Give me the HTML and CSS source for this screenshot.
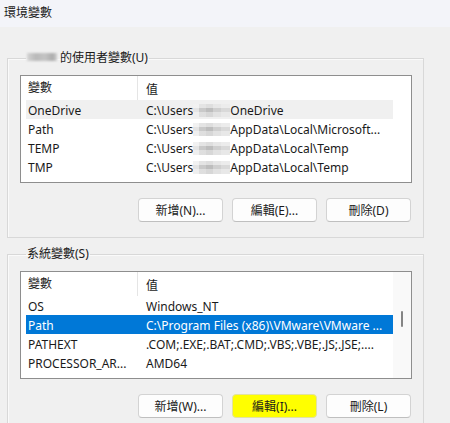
FILE: index.html
```html
<!DOCTYPE html>
<html lang="zh-Hant">
<head>
    <meta charset="UTF-8">
    <title>環境變數</title>
    <link rel="stylesheet" href="styles.css">
</head>
<body>
    <div class="titlebar">環境變數</div>

    <fieldset class="group">
        <legend><span class="blur-name"></span>的使用者變數(U)</legend>
        <div class="list">
            <div class="list-body">
                <div class="list-head">
                    <div class="head-name">變數</div>
                    <div class="head-value">值</div>
                </div>
                <div class="row hover">
                    <div class="cell-name">OneDrive</div>
                    <div class="cell-value">C:\Users<span class="blur-path"></span>OneDrive</div>
                </div>
                <div class="row">
                    <div class="cell-name">Path</div>
                    <div class="cell-value">C:\Users<span class="blur-path"></span>AppData\Local\Microsoft...</div>
                </div>
                <div class="row">
                    <div class="cell-name">TEMP</div>
                    <div class="cell-value">C:\Users<span class="blur-path"></span>AppData\Local\Temp</div>
                </div>
                <div class="row">
                    <div class="cell-name">TMP</div>
                    <div class="cell-value">C:\Users<span class="blur-path"></span>AppData\Local\Temp</div>
                </div>
            </div>
            <div class="scroll"></div>
        </div>
        <div class="buttons">
            <button class="btn">新增(N)...</button>
            <button class="btn">編輯(E)...</button>
            <button class="btn">刪除(D)</button>
        </div>
    </fieldset>

    <fieldset class="group">
        <legend>系統變數(S)</legend>
        <div class="list">
            <div class="list-body">
                <div class="list-head">
                    <div class="head-name">變數</div>
                    <div class="head-value">值</div>
                </div>
                <div class="row">
                    <div class="cell-name">OS</div>
                    <div class="cell-value">Windows_NT</div>
                </div>
                <div class="row selected">
                    <div class="cell-name">Path</div>
                    <div class="cell-value">C:\Program Files (x86)\VMware\VMware ...</div>
                </div>
                <div class="row">
                    <div class="cell-name">PATHEXT</div>
                    <div class="cell-value">.COM;.EXE;.BAT;.CMD;.VBS;.VBE;.JS;.JSE;....</div>
                </div>
                <div class="row">
                    <div class="cell-name">PROCESSOR_AR...</div>
                    <div class="cell-value">AMD64</div>
                </div>
            </div>
            <div class="scroll track">
                <div class="thumb"></div>
            </div>
        </div>
        <div class="buttons">
            <button class="btn">新增(W)...</button>
            <button class="btn highlight">編輯(I)...</button>
            <button class="btn">刪除(L)</button>
        </div>
    </fieldset>
</body>
</html>
```

FILE: styles.css
```css
body {
    margin: 0;
    background-color: #f0f0f0;
    font-family: "Noto Sans", "Noto Sans CJK TC", sans-serif;
    font-size: 12px;
    color: #1a1a1a;
    overflow: hidden;
}

.titlebar {
    height: 27px;
    line-height: 25px;
    padding-left: 4px;
    background-color: #f3f4f9;
}

.group {
    width: 392px;
    margin: 23px 0 0 7px;
    padding: 9px 11px 15px 12px;
    border: 1px solid #d8d8d8;
    box-shadow: inset 1px 1px 0 #fafafa;
    min-width: 0;
}

.group + .group {
    margin-top: 8px;
}

legend {
    height: 16px;
    line-height: 16px;
    padding: 0 1px;
    margin-left: 6px;
}

.blur-name {
    display: inline-block;
    width: 30px;
    height: 8px;
    margin-right: 3px;
    vertical-align: 1px;
    background: linear-gradient(90deg, #d4d4d4, #b9b9b9 30%, #c4c4c4 60%, #adadad 85%, #cfcfcf);
    filter: blur(1px);
}

.list {
    display: flex;
    height: 106px;
    border: 1px solid #8e8e8e;
    background-color: #fff;
    overflow: hidden;
}

.list-body {
    flex: 1;
    padding-left: 5px;
    min-width: 0;
}

.list-head {
    display: flex;
    height: 24px;
    align-items: center;
}

.head-name {
    width: 109px;
    padding-left: 2px;
    border-right: 1px solid #e5e5e5;
    line-height: 24px;
}

.head-value {
    padding-left: 8px;
    padding-top: 1px;
}

.row {
    display: flex;
    height: 19px;
    box-sizing: border-box;
    padding-top: 2px;
    line-height: 17px;
    white-space: nowrap;
}

.row.hover {
    background-color: #f0f0f0;
}

.row.selected {
    background-color: #0078d7;
    color: #fff;
}

.cell-name {
    width: 116px;
    padding-left: 2px;
    overflow: hidden;
}

.cell-value {
    flex: 1;
    padding-left: 2px;
    overflow: hidden;
}

.blur-path {
    display: inline-block;
    width: 37px;
    height: 13px;
    vertical-align: -2px;
    background:
        linear-gradient(180deg, rgba(255,255,255,0.5) 0 30%, rgba(0,0,0,0) 30% 60%, rgba(255,255,255,0.4) 60%),
        linear-gradient(90deg, #e4e4e4 0 15%, #c9c9c9 15% 35%, #bdbdbd 35% 55%, #cfcfcf 55% 75%, #d9d9d9 75%);
}

.scroll {
    width: 18px;
}

.scroll.track {
    background-color: #f9f9f9;
}

.thumb {
    width: 2px;
    height: 16px;
    margin: 39px 0 0 8px;
    background-color: #858585;
    border-radius: 1px;
}

.buttons {
    display: flex;
    justify-content: flex-end;
    gap: 9px;
    margin-top: 15px;
    padding-right: 1px;
}

.btn {
    width: 85px;
    height: 24px;
    font-family: "Noto Sans", "Noto Sans CJK TC", sans-serif;
    font-size: 12px;
    color: #1a1a1a;
    background-color: #fdfdfd;
    border: 1px solid #d3d3d3;
    border-bottom-color: #bfbfbf;
    border-radius: 4px;
    padding: 0;
}

.btn.highlight {
    background-color: #ffff00;
    border-color: #e2e2a0;
}
```
